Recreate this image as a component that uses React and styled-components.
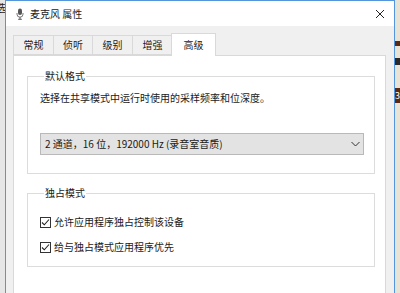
import React from "react";
import styled, { createGlobalStyle } from "styled-components";

const Global = createGlobalStyle`
  html, body { margin: 0; padding: 0; background: #f0f0f0; }
  body { font-family: "Noto Sans CJK SC", "Noto Sans", sans-serif; font-size: 10px; color: #1a1a1a; }
`;

const Page = styled.div`
  display: flex;
  width: 400px;
  height: 293px;
  overflow: hidden;
`;

const LeftStrip = styled.div`
  width: 5px;
  flex: none;
  background: #e6e6e6;
  overflow: hidden;
  border-right: 0;
`;

const StripChar = styled.div`
  font-size: 10px;
  line-height: 12px;
  margin-top: 2px;
  margin-left: -4px;
  color: #222;
  white-space: nowrap;
`;

const RightStrip = styled.div`
  width: 5px;
  flex: none;
  background: #e9e3d6;
  display: flex;
  flex-direction: column;
`;

const StripBlock = styled.div`
  height: ${(p) => p.$h}px;
  margin-top: ${(p) => p.$mt}px;
  background: ${(p) => p.$c};
  color: #fff;
  font-size: 9px;
  line-height: ${(p) => p.$h}px;
  overflow: hidden;
`;

const Window = styled.div`
  width: 390px;
  height: 340px;
  flex: none;
  box-sizing: border-box;
  border: 1px solid #5496dc;
  border-bottom: none;
  display: flex;
  flex-direction: column;
  background: #f0f0f0;
`;

const TitleBar = styled.div`
  height: 25px;
  flex: none;
  background: #fff;
  display: flex;
  align-items: center;
  padding: 0 9px 0 10px;
`;

const TitleText = styled.div`
  margin-left: 6px;
  font-size: 10px;
  line-height: 14px;
  color: #1a1a1a;
  flex: 1;
`;

const Body = styled.div`
  flex: 1;
  display: flex;
  flex-direction: column;
  padding: 7px 8px 0 7px;
`;

const TabRow = styled.div`
  display: flex;
  align-items: flex-end;
`;

const Tab = styled.div`
  box-sizing: border-box;
  width: ${(p) => p.$w}px;
  height: ${(p) => (p.$active ? 23 : 20)}px;
  margin-left: ${(p) => (p.$first ? 0 : p.$active ? -2 : -1)}px;
  margin-bottom: ${(p) => (p.$active ? -1 : 0)}px;
  border: 1px solid #d9d9d9;
  border-bottom: ${(p) => (p.$active ? "none" : "1px solid #d9d9d9")};
  background: ${(p) => (p.$active ? "#fff" : "#f0f0f0")};
  position: relative;
  z-index: ${(p) => (p.$active ? 2 : 1)};
  display: flex;
  justify-content: center;
  padding-top: ${(p) => (p.$active ? 4 : 2)}px;
  font-size: 10px;
  line-height: 14px;
  color: #1a1a1a;
`;

const Panel = styled.div`
  flex: 1;
  background: #fff;
  border: 1px solid #d9d9d9;
  display: flex;
  flex-direction: column;
`;

const Group = styled.fieldset`
  margin: ${(p) => p.$mt}px 10px 0 13px;
  padding: ${(p) => p.$pad};
  border: 1px solid #dcdcdc;
  min-inline-size: 0;
  display: flex;
  flex-direction: column;
`;

const Legend = styled.legend`
  margin-left: 4px;
  padding: 0 1px;
  font-size: 10px;
  line-height: 16px;
  color: #1a1a1a;
`;

const Desc = styled.div`
  font-size: 10px;
  line-height: 16px;
  color: #1a1a1a;
`;

const Select = styled.div`
  margin-top: 27px;
  height: 22px;
  box-sizing: border-box;
  border: 1px solid #b9b9b9;
  background: #e3e3e3;
  display: flex;
  align-items: center;
  padding: 0 3px 0 4px;
  font-size: 10px;
  color: #1a1a1a;
`;

const SelectText = styled.div`
  flex: 1;
  line-height: 14px;
  white-space: nowrap;
`;

const CheckRow = styled.label`
  display: flex;
  align-items: center;
  gap: 3px;
  height: 16px;
  margin-top: ${(p) => p.$mt}px;
  font-size: 10px;
  line-height: 16px;
  color: #1a1a1a;
`;

const Box = styled.span`
  width: 11px;
  height: 11px;
  box-sizing: border-box;
  border: 1px solid #333;
  background: #fff;
  display: flex;
  align-items: center;
  justify-content: center;
`;

const MicIcon = () => (
  <svg width="8" height="12" viewBox="0 0 8 12">
    <rect x="2" y="0.5" width="4" height="6.5" rx="2" fill="#555" />
    <path d="M1 5v1.2a3 3 0 0 0 6 0V5" fill="none" stroke="#666" strokeWidth="0.9" />
    <path d="M4 9.2V11M2.2 11.3h3.6" stroke="#555" strokeWidth="1" />
  </svg>
);

const CloseIcon = () => (
  <svg width="10" height="10" viewBox="0 0 10 10">
    <path d="M1 1L9 9M9 1L1 9" stroke="#222" strokeWidth="1" />
  </svg>
);

const Chevron = () => (
  <svg width="9" height="6" viewBox="0 0 9 6">
    <path d="M0.5 1l4 4 4-4" fill="none" stroke="#333" strokeWidth="1" />
  </svg>
);

const Check = () => (
  <svg width="9" height="9" viewBox="0 0 9 9">
    <path d="M1 4.5l2.3 2.3L8 1.5" fill="none" stroke="#222" strokeWidth="1.1" />
  </svg>
);

const tabs = [
  { label: "常规", w: 41 },
  { label: "侦听", w: 40 },
  { label: "级别", w: 41 },
  { label: "增强", w: 41 },
  { label: "高级", w: 45, active: true },
];

export default function App() {
  return (
    <>
      <Global />
      <Page>
        <LeftStrip>
          <StripChar>选</StripChar>
        </LeftStrip>
        <Window>
          <TitleBar>
            <MicIcon />
            <TitleText>麦克风 属性</TitleText>
            <CloseIcon />
          </TitleBar>
          <Body>
            <TabRow>
              {tabs.map((t, i) => (
                <Tab key={t.label} $w={t.w} $active={t.active} $first={i === 0}>
                  {t.label}
                </Tab>
              ))}
            </TabRow>
            <Panel>
              <Group $mt={12} $pad="6px 10px 18px 12px">
                <Legend>默认格式</Legend>
                <Desc>选择在共享模式中运行时使用的采样频率和位深度。</Desc>
                <Select>
                  <SelectText>2 通道，16 位，192000 Hz (录音室音质)</SelectText>
                  <Chevron />
                </Select>
              </Group>
              <Group $mt={11} $pad="0 10px 11px 12px">
                <Legend>独占模式</Legend>
                <CheckRow $mt={13}>
                  <Box>
                    <Check />
                  </Box>
                  允许应用程序独占控制该设备
                </CheckRow>
                <CheckRow $mt={9}>
                  <Box>
                    <Check />
                  </Box>
                  给与独占模式应用程序优先
                </CheckRow>
              </Group>
            </Panel>
          </Body>
        </Window>
        <RightStrip>
          <StripBlock $h={5} $mt={41} $c="#5a2a14" />
          <StripBlock $h={7} $mt={12} $c="#2a2a2a" />
          <StripBlock $h={15} $mt={23} $c="#5a2a14">3</StripBlock>
        </RightStrip>
      </Page>
    </>
  );
}
